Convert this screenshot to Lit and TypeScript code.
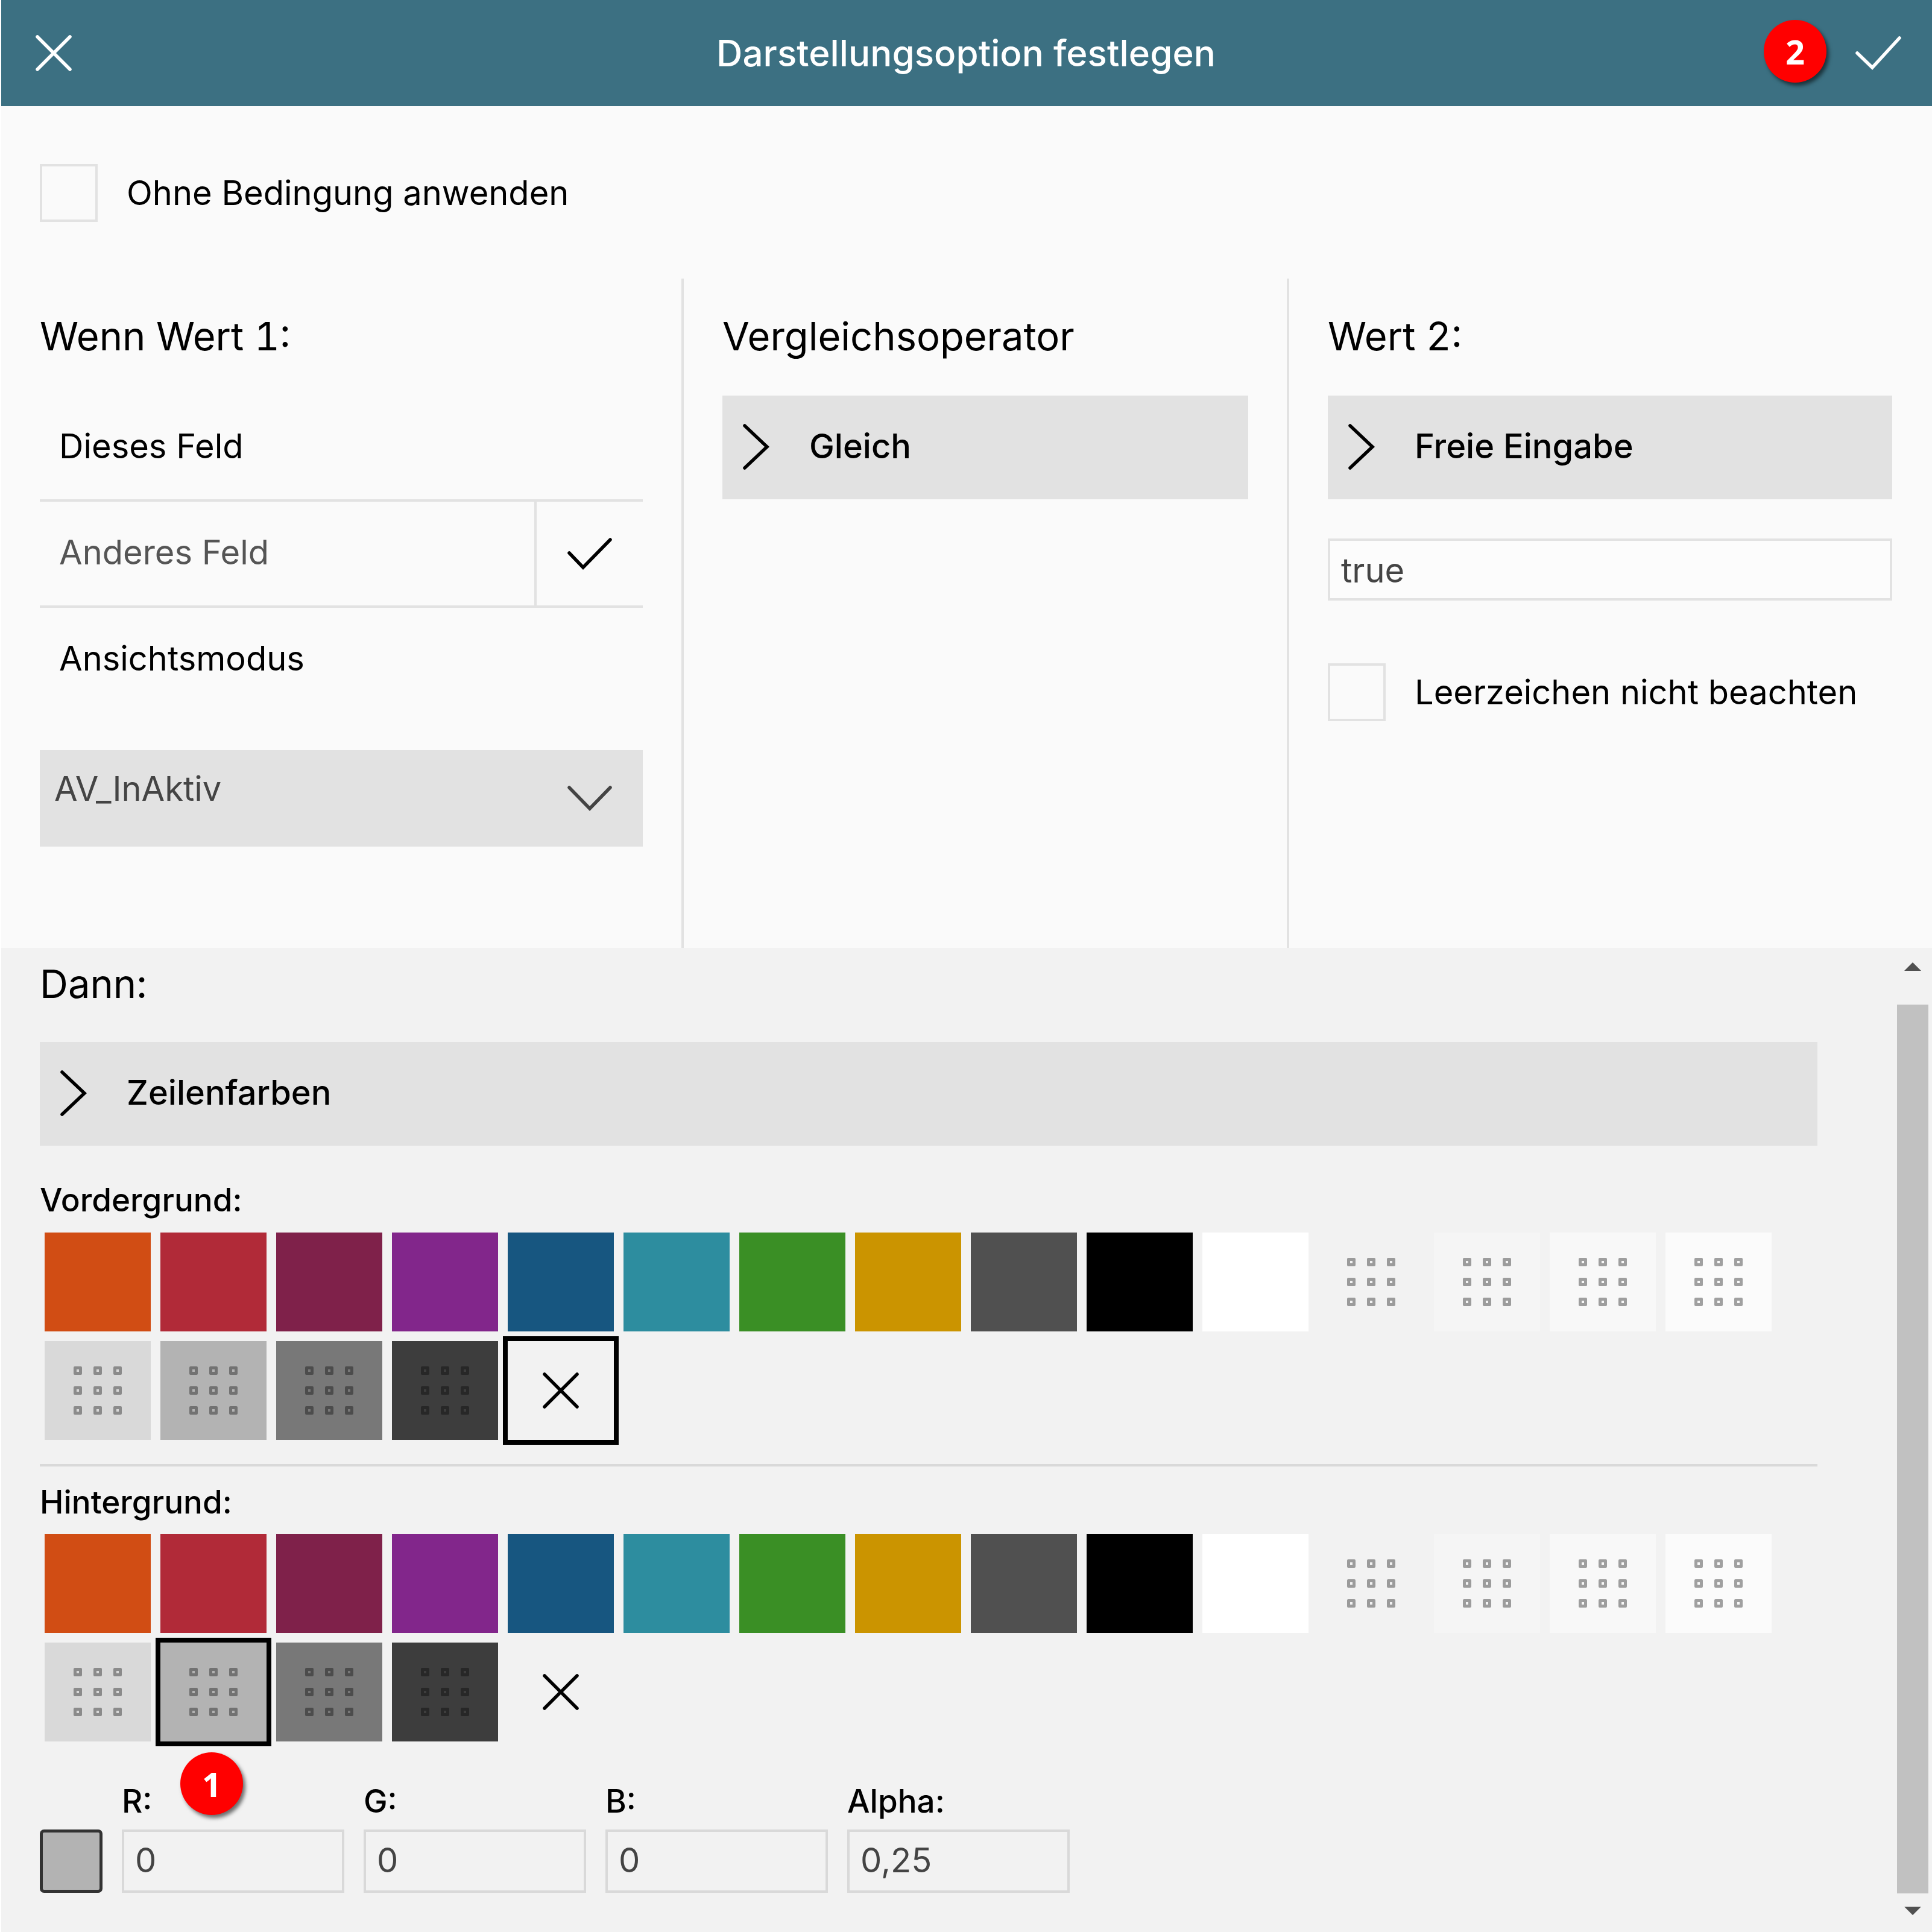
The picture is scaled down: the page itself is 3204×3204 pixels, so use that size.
import { LitElement, html, css, svg } from "lit";
import { customElement } from "lit/decorators.js";

const COLORS = [
  "#d14d14", "#b12a38", "#7f214a", "#82268b", "#175680", "#2d8d9f", "#3a8f25", "#cb9400", "#505050", "#000000", "#ffffff",
];
const PATTERNED_TOP = ["#f2f2f2", "#f5f5f5", "#f8f8f8", "#fbfbfb"];
const PATTERNED_BOTTOM = ["#d9d9d9", "#b3b3b3", "#787878", "#3d3d3d"];

const icon = (w: number, h: number, points: string, cls = "") => html`
  <svg class="icon ${cls}" width=${w} height=${h} viewBox="0 0 ${w} ${h}">
    ${svg`<polyline points=${points}></polyline>`}
  </svg>
`;
const chevronRight = () => icon(46, 78, "4,4 41,39 4,74");
const cross = (cls = "") => html`
  <svg class="icon ${cls}" width="60" height="60" viewBox="0 0 60 60">
    ${svg`<path d="M3 3 L57 57 M57 3 L3 57"></path>`}
  </svg>
`;

@customElement("app-root")
export class AppRoot extends LitElement {
  static styles = css`
    :host {
      display: block;
      width: 3204px;
      height: 3204px;
      background: #fff;
      font-family: Inter, "Liberation Sans", sans-serif;
      font-size: 56px;
      color: #000;
    }
    .page {
      position: relative;
      height: 100%;
      padding-left: 2px;
      box-sizing: border-box;
      display: flex;
      flex-direction: column;
    }
    .icon {
      display: block;
      flex: none;
      fill: none;
      stroke: currentColor;
      stroke-width: 5.5;
      stroke-linecap: round;
      stroke-linejoin: miter;
    }

    header {
      height: 176px;
      flex: none;
      background: #3c7082;
      color: #fff;
      display: flex;
      align-items: center;
      justify-content: space-between;
      padding: 0 51px 0 57px;
    }
    .title {
      margin-left: 8px;
      font-size: 60px;
      font-weight: 500;
      letter-spacing: 0.1px;
    }

    .badge {
      position: absolute;
      width: 104px;
      height: 104px;
      border-radius: 50%;
      background: #ff0000;
      color: #fff;
      display: flex;
      align-items: center;
      justify-content: center;
      font-family: "Open Sans", sans-serif;
      font-size: 56px;
      font-weight: 700;
      box-shadow: 4px 5px 6px rgba(0, 0, 0, 0.55);
    }
    .badge.two { left: 2925px; top: 33px; }
    .badge.one { left: 299px; top: 2906px; }

    .upper {
      height: 1396px;
      flex: none;
      background: #fafafa;
      display: flex;
      flex-direction: column;
    }
    .check-row {
      display: flex;
      align-items: center;
      gap: 48px;
    }
    .box {
      width: 96px;
      height: 96px;
      box-sizing: border-box;
      border: 4px solid #e2e2e2;
      flex: none;
    }
    .upper > .check-row {
      margin: 96px 0 94px 64px;
    }
    .columns {
      flex: 1;
      display: grid;
      grid-template-columns: 1132px 1004px 1fr;
    }
    .col {
      padding: 0 64px;
      border-right: 4px solid #e2e2e2;
    }
    .col:last-child { border-right: none; padding-right: 66px; }
    h2 {
      margin: 0;
      font-size: 65px;
      font-weight: 400;
      font-variant-numeric: tabular-nums;
      height: 194px;
      line-height: 192px;
    }
    .row {
      height: 172px;
      display: flex;
      align-items: center;
      padding-left: 32px;
    }
    .row > span { margin-bottom: 4px; }
    .row.picked {
      height: 172px;
      border-top: 4px solid #e2e2e2;
      border-bottom: 4px solid #e2e2e2;
      color: #555;
      justify-content: space-between;
    }
    .row.picked .mark {
      width: 176px;
      height: 100%;
      border-left: 4px solid #e2e2e2;
      color: #000;
      display: flex;
      align-items: center;
      justify-content: center;
    }
    .bar {
      height: 172px;
      background: #e2e2e2;
      display: flex;
      align-items: center;
      font-weight: 500;
    }
    .bar .icon { margin: 0 65px 3px 33px; }
    .bar span { margin-bottom: 4px; }
    .select {
      margin-top: 64px;
      height: 160px;
      background: #e2e2e2;
      color: #444;
      display: flex;
      justify-content: space-between;
      padding-left: 24px;
      box-sizing: border-box;
    }
    .select span { margin-top: 30px; }
    .select .icon { margin: 59px 50px 0 0; }
    .field {
      border: 4px solid #e2e2e2;
      box-sizing: border-box;
      color: #444;
      display: flex;
      align-items: center;
      padding-left: 18px;
    }
    .value-field {
      height: 103px;
      margin-top: 65px;
      background: #fcfcfc;
      padding-top: 3px;
    }
    .col > .check-row {
      margin-top: 104px;
    }

    .lower {
      flex: 1;
      min-height: 0;
      background: #f2f2f2;
      display: flex;
    }
    .lower .field { border-color: #d9d9d9; padding-bottom: 3px; }
    .content {
      flex: 1;
      padding-left: 64px;
      padding-right: 132px;
    }
    .content h2 {
      height: 120px;
      line-height: 120px;
      margin-bottom: 36px;
    }
    .label {
      height: 80px;
      line-height: 80px;
      font-size: 53px;
      font-weight: 500;
    }
    .label.first { margin-top: 50px; margin-bottom: 6px; }
    .label.second { margin-top: 19px; margin-bottom: 5px; }
    .swatches {
      display: grid;
      grid-template-columns: repeat(15, 192px);
      grid-auto-rows: 180px;
    }
    .swatch {
      border: 8px solid transparent;
      background-clip: padding-box;
      display: flex;
      align-items: center;
      justify-content: center;
    }
    .swatch.selected { border-color: #000; }
    .dots {
      display: grid;
      grid-template-columns: repeat(3, 14px);
      grid-auto-rows: 14px;
      gap: 19px;
    }
    .dots i {
      box-sizing: border-box;
      border: 5px solid rgba(0, 0, 0, 0.36);
      border-radius: 2px;
    }
    hr {
      border: none;
      height: 4px;
      background: #d9d9d9;
      margin: 32px 0 0;
    }
    .rgba {
      display: flex;
      align-items: flex-end;
      gap: 32px;
      margin-top: 49px;
    }
    .preview {
      width: 104px;
      height: 105px;
      box-sizing: border-box;
      background: #b3b3b3;
      border: 5px solid #333;
      border-radius: 7px;
    }
    .channels {
      display: grid;
      grid-template-columns: repeat(4, 369px);
      gap: 9px 32px;
    }
    .channels .label { grid-row: 1; line-height: 84px; }
    .channels .field { grid-row: 2; height: 105px; }

    .scrollbar {
      flex: none;
      width: 52px;
      margin-right: 6px;
      display: flex;
      flex-direction: column;
      align-items: center;
    }
    .arrow {
      width: 0;
      height: 0;
      border-left: 14px solid transparent;
      border-right: 14px solid transparent;
    }
    .arrow.up { border-bottom: 14px solid #505050; margin-top: 24px; }
    .arrow.down { border-top: 14px solid #505050; margin-top: 22px; }
    .thumb {
      width: 52px;
      height: 1474px;
      margin-top: 56px;
      background: #c1c1c1;
    }
  `;

  private swatch(color: string, dotted: boolean, selected: boolean) {
    return html`
      <div class="swatch ${selected ? "selected" : ""}" style="background-color: ${color}">
        ${dotted ? html`<div class="dots">${Array.from({ length: 9 }, () => html`<i></i>`)}</div>` : ""}
      </div>
    `;
  }

  private palette(selected: number) {
    return html`
      <div class="swatches">
        ${COLORS.map((c) => this.swatch(c, false, false))}
        ${PATTERNED_TOP.map((c) => this.swatch(c, true, false))}
        ${PATTERNED_BOTTOM.map((c, i) => this.swatch(c, true, selected === i))}
        <div class="swatch ${selected === 4 ? "selected" : ""}">${cross()}</div>
      </div>
    `;
  }

  render() {
    return html`
      <div class="page">
        <header>
          ${cross()}
          <div class="title">Darstellungsoption festlegen</div>
          ${icon(76, 56, "3,28 28,52 73,3")}
        </header>

        <section class="upper">
          <div class="check-row">
            <div class="box"></div>
            <span>Ohne Bedingung anwenden</span>
          </div>
          <div class="columns">
            <div class="col">
              <h2>Wenn Wert 1:</h2>
              <div class="row"><span>Dieses Feld</span></div>
              <div class="row picked">
                <span>Anderes Feld</span>
                <div class="mark">${icon(76, 54, "4,26 27,50 72,4")}</div>
              </div>
              <div class="row"><span>Ansichtsmodus</span></div>
              <div class="select">
                <span>AV_InAktiv</span>
                ${icon(76, 42, "4,3 38,38 72,3")}
              </div>
            </div>
            <div class="col">
              <h2>Vergleichsoperator</h2>
              <div class="bar">${chevronRight()}<span>Gleich</span></div>
            </div>
            <div class="col">
              <h2>Wert 2:</h2>
              <div class="bar">${chevronRight()}<span>Freie Eingabe</span></div>
              <div class="field value-field">true</div>
              <div class="check-row">
                <div class="box"></div>
                <span>Leerzeichen nicht beachten</span>
              </div>
            </div>
          </div>
        </section>

        <section class="lower">
          <div class="content">
            <h2>Dann:</h2>
            <div class="bar">${chevronRight()}<span>Zeilenfarben</span></div>
            <div class="label first">Vordergrund:</div>
            ${this.palette(4)}
            <hr />
            <div class="label second">Hintergrund:</div>
            ${this.palette(1)}
            <div class="rgba">
              <div class="preview"></div>
              <div class="channels">
                <div class="label">R:</div>
                <div class="label">G:</div>
                <div class="label">B:</div>
                <div class="label">Alpha:</div>
                <div class="field">0</div>
                <div class="field">0</div>
                <div class="field">0</div>
                <div class="field">0,25</div>
              </div>
            </div>
          </div>
          <div class="scrollbar">
            <div class="arrow up"></div>
            <div class="thumb"></div>
            <div class="arrow down"></div>
          </div>
        </section>

        <div class="badge two">2</div>
        <div class="badge one">1</div>
      </div>
    `;
  }
}
